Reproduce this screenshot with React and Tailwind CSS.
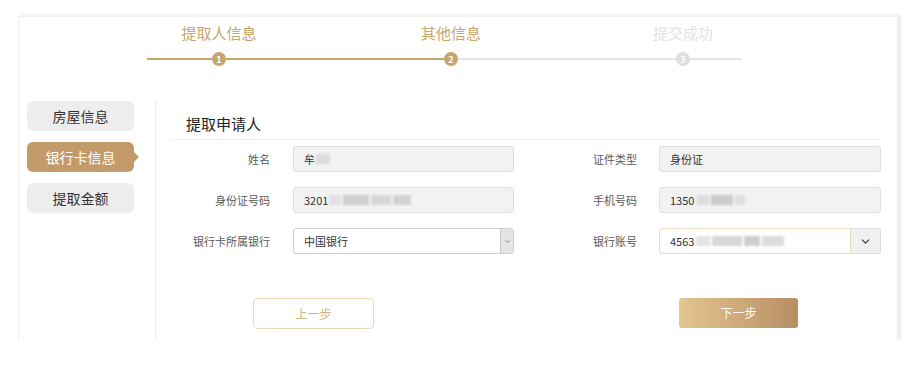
import React from 'react';
import { ChevronDown } from 'lucide-react';

const font = { fontFamily: '"Noto Sans CJK SC", "Noto Sans", sans-serif' };

const steps = [
  { label: '提取人信息', done: true },
  { label: '其他信息', done: true },
  { label: '提交成功', done: false },
];

const menu = [
  { label: '房屋信息', active: false },
  { label: '银行卡信息', active: true },
  { label: '提取金额', active: false },
];

const StepDot = ({ n, done }) => (
  <div
    className={`w-[14px] h-[14px] rounded-full flex items-center justify-center text-[9px] font-bold leading-none text-white shrink-0 ${
      done ? 'bg-[#c6a66c]' : 'bg-[#dedede]'
    }`}
  >
    {n}
  </div>
);

const Blur = ({ w, shade = 'bg-[#cfcfcf]' }) => (
  <span className={`inline-block h-[10px] ${w} ${shade} blur-[1px]`} />
);

const Field = ({ label, labelW, gap, inputW, children }) => (
  <div className="flex items-center">
    <div className={`${labelW} text-right text-[11px] text-[#5a5a5a]`}>{label}</div>
    <div
      className={`${gap} ${inputW} h-[26px] rounded-[3px] border bg-[#f2f2f2] border-[#dedede] flex items-center pl-[10px] text-[11px] text-[#333] overflow-hidden`}
    >
      {children}
    </div>
  </div>
);

export default function App() {
  return (
    <div className="min-h-[375px] bg-white pt-[16px] pl-[18px]" style={font}>
      <div className="w-[880px] h-[324px] bg-white border border-b-0 border-[#f0f0f0] shadow-[3px_-1px_3px_rgba(0,0,0,0.08)]">
        {/* step labels */}
        <div className="flex ml-[84px] pt-[6px]">
          {steps.map((s) => (
            <div
              key={s.label}
              className={`w-[232px] text-center text-[15px] leading-[20px] ${
                s.done ? 'text-[#c6a66c]' : 'text-[#e2e2e2]'
              }`}
            >
              {s.label}
            </div>
          ))}
        </div>

        {/* step line */}
        <div className="flex items-center ml-[128px] mt-[9px] h-[14px]">
          <div className="w-[65px] h-[2px] bg-[#c6a66c]" />
          <StepDot n="1" done />
          <div className="w-[218px] h-[2px] bg-[#c6a66c]" />
          <StepDot n="2" done />
          <div className="w-[218px] h-[2px] bg-[#e6e6e6]" />
          <StepDot n="3" />
          <div className="w-[52px] h-[2px] bg-[#e6e6e6]" />
        </div>

        {/* body */}
        <div className="flex mt-[34px] h-[240px]">
          <div className="w-[136px] pl-[8px] pt-[1px] flex flex-col gap-[11px]">
            {menu.map((m) => (
              <div
                key={m.label}
                className={`relative w-[107px] h-[30px] rounded-[6px] flex items-center justify-center text-[14px] ${
                  m.active ? 'bg-[#c39b6b] text-white' : 'bg-[#eeedee] text-[#333]'
                }`}
              >
                {m.label}
                {m.active && (
                  <span className="absolute right-[-5px] top-1/2 -translate-y-1/2 w-0 h-0 border-y-[5px] border-y-transparent border-l-[5px] border-l-[#c39b6b]" />
                )}
              </div>
            ))}
          </div>

          <div className="flex-1 border-l border-[#eeeeee] pl-[15px] pr-[16px]">
            <div className="pt-[14px] pb-[5px] pl-[15px] border-b border-[#f0f0f0] text-[15px] leading-[20px] text-[#222]">
              提取申请人
            </div>

            <div className="mt-[6px] flex flex-col gap-[15px]">
              <div className="flex">
                <Field label="姓名" labelW="w-[99px]" gap="ml-[23px]" inputW="w-[221px]">
                  <span>牟</span>
                  <Blur w="w-[14px] ml-[1px]" shade="bg-[#dcdcdc]" />
                </Field>
                <Field label="证件类型" labelW="w-[123px]" gap="ml-[22px]" inputW="w-[222px]">
                  身份证
                </Field>
              </div>

              <div className="flex">
                <Field label="身份证号码" labelW="w-[99px]" gap="ml-[23px]" inputW="w-[221px]">
                  <span>3201</span>
                  <span className="flex items-center gap-[2px] ml-[1px]">
                    <Blur w="w-[12px]" shade="bg-[#e2e2e2]" />
                    <Blur w="w-[26px]" />
                    <Blur w="w-[20px]" shade="bg-[#d6d6d6]" />
                    <Blur w="w-[18px]" shade="bg-[#d2d2d2]" />
                  </span>
                </Field>
                <Field label="手机号码" labelW="w-[123px]" gap="ml-[22px]" inputW="w-[222px]">
                  <span>1350</span>
                  <span className="flex items-center gap-[2px] ml-[3px]">
                    <Blur w="w-[12px]" shade="bg-[#dedede]" />
                    <Blur w="w-[22px]" shade="bg-[#cccccc]" />
                    <Blur w="w-[10px]" shade="bg-[#dddddd]" />
                  </span>
                </Field>
              </div>

              <div className="flex">
                <div className="flex items-center">
                  <div className="w-[99px] text-right text-[11px] text-[#5a5a5a]">银行卡所属银行</div>
                  <div className="ml-[23px] w-[221px] h-[26px] rounded-[3px] border border-[#cfcfcf] bg-white flex items-center text-[11px] text-[#333] overflow-hidden">
                    <span className="flex-1 pl-[10px]">中国银行</span>
                    <span className="w-[13px] h-full bg-[#e4e4e4] border-l border-[#c8c8c8] flex items-center justify-center">
                      <ChevronDown size={7} strokeWidth={2.5} className="text-[#666]" />
                    </span>
                  </div>
                </div>
                <div className="flex items-center">
                  <div className="w-[123px] text-right text-[11px] text-[#5a5a5a]">银行账号</div>
                  <div className="ml-[22px] w-[222px] h-[26px] flex">
                    <div className="flex-1 h-full bg-white border border-[#eadcc0] rounded-l-[3px] flex items-center pl-[10px] text-[11px] text-[#333] overflow-hidden">
                      <span>4563</span>
                      <span className="flex items-center gap-[2px] ml-[2px]">
                        <Blur w="w-[14px]" shade="bg-[#e4e4e4]" />
                        <Blur w="w-[30px]" shade="bg-[#d8d8d8]" />
                        <Blur w="w-[16px]" shade="bg-[#cdcdcd]" />
                        <Blur w="w-[22px]" shade="bg-[#dcdcdc]" />
                      </span>
                    </div>
                    <div className="w-[30px] h-full bg-[#f0f0f0] border border-l-0 border-[#dcdcdc] rounded-r-[3px] flex items-center justify-center">
                      <ChevronDown size={13} strokeWidth={2} className="text-[#333]" />
                    </div>
                  </div>
                </div>
              </div>
            </div>

            <div className="mt-[44px] flex items-start">
              <button className="ml-[82px] w-[121px] h-[31px] rounded-[4px] border border-[#ead9b9] bg-white text-[12px] text-[#d2b483]">
                上一步
              </button>
              <button className="ml-[305px] w-[119px] h-[30px] rounded-[3px] bg-gradient-to-r from-[#e3c690] to-[#b88e65] text-[12px] text-white">
                下一步
              </button>
            </div>
          </div>
        </div>
      </div>
    </div>
  );
}
